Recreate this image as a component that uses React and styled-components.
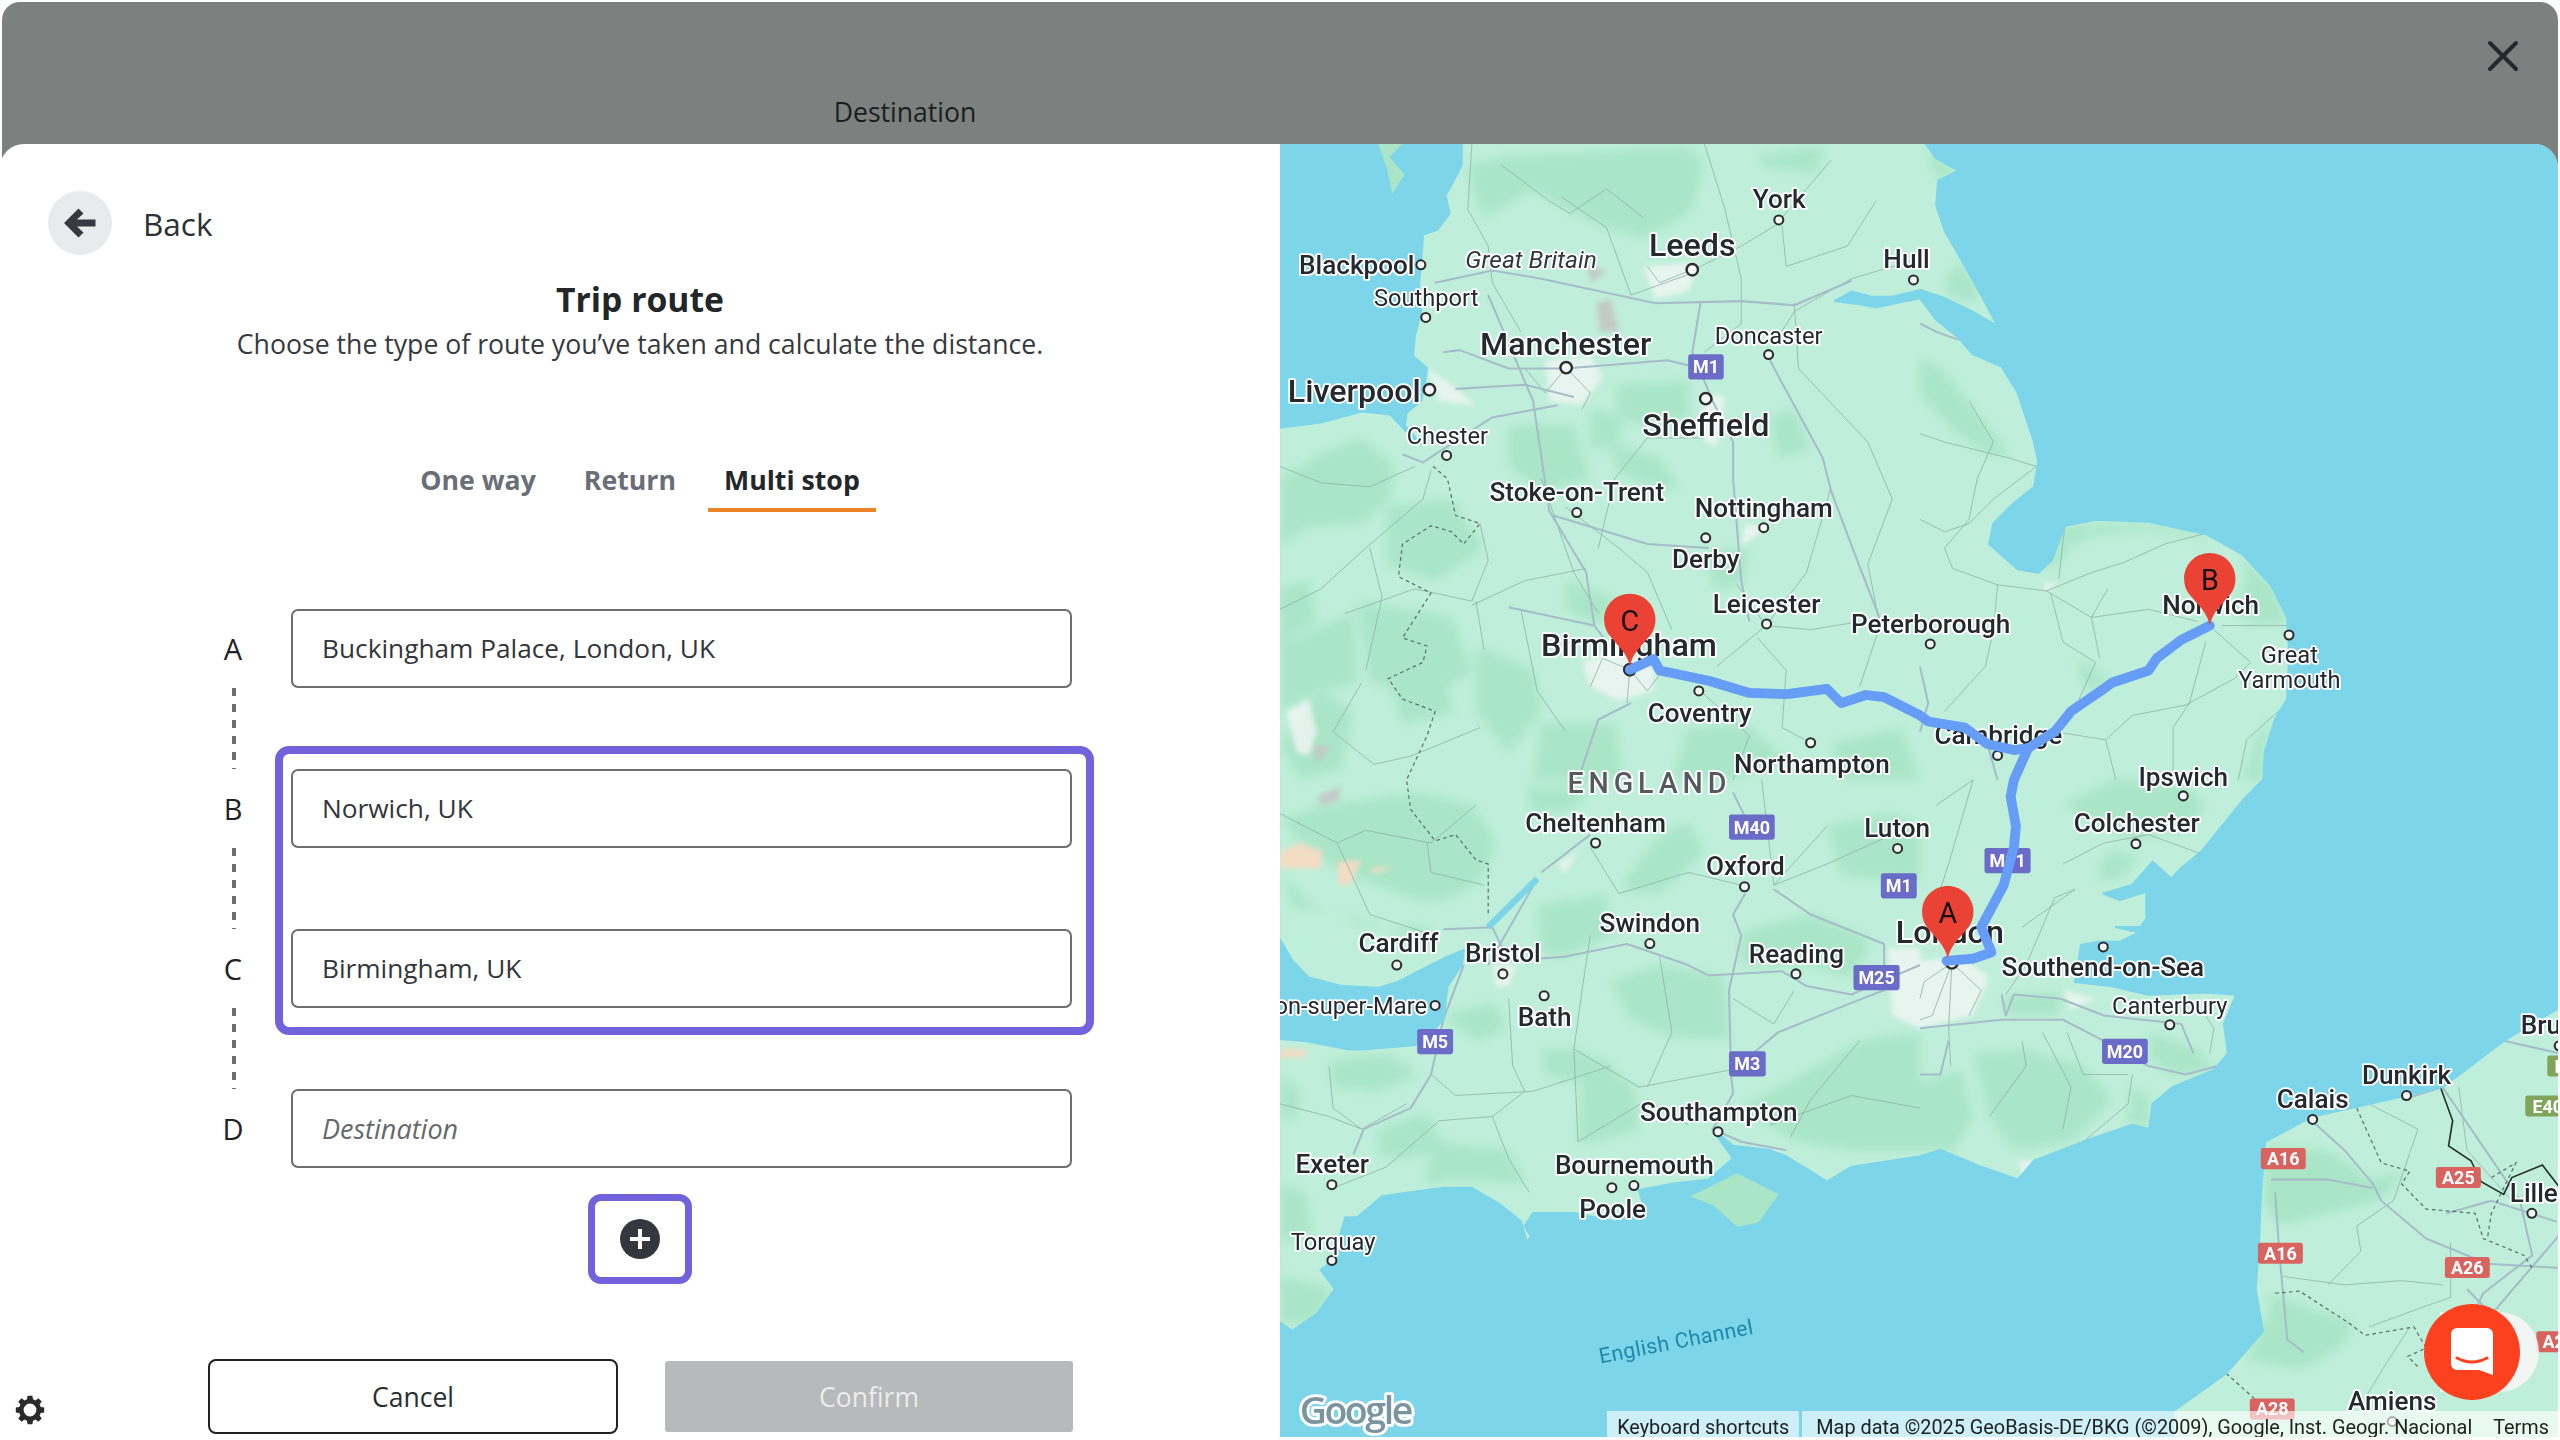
import React from 'react'
import styled, { createGlobalStyle } from 'styled-components'

const PURPLE = '#7263dc'
const FONT = '"Open Sans", "Noto Sans", sans-serif'
const SEA = '#7dd5ea'

const GlobalStyle = createGlobalStyle`
  html, body {
    margin: 0;
    background: #fff;
    font-family: ${FONT};
  }
`

const Page = styled.div`
  width: 2560px;
  height: 1440px;
  overflow: hidden;
  background: #fff;
`

const Header = styled.header`
  height: 172px;
  margin: 2px 2px -30px;
  padding-top: 90px;
  box-sizing: border-box;
  background: #7c807e;
  border-radius: 18px 18px 0 0;
  position: relative;
  text-align: center;
`

const HeaderTitle = styled.div`
  width: 1806px;
  font-size: 26.6px;
  font-weight: 500;
  line-height: 40px;
  color: #1b1e1d;
`

const CloseButton = styled.button`
  position: absolute;
  top: 34px;
  right: 35px;
  width: 40px;
  height: 40px;
  padding: 0;
  border: 0;
  background: none;
`

const Body = styled.div`
  display: flex;
  height: 1293px;
  position: relative;
`

const Panel = styled.section`
  width: 1280px;
  box-sizing: border-box;
  padding-top: 47px;
  background: #fff;
  border-radius: 24px 0 0 14px;
  position: relative;
`

const BackRow = styled.div`
  display: flex;
  align-items: center;
  gap: 31px;
  margin-left: 48px;
  height: 64px;
  font-size: 31.5px;
  color: #2d3136;
`

const BackCircle = styled.span`
  display: flex;
  align-items: center;
  justify-content: center;
  width: 64px;
  height: 64px;
  border-radius: 50%;
  background: #e9eaec;
`

const Title = styled.h1`
  margin: 20px 0 0;
  text-align: center;
  font-size: 33.7px;
  line-height: 48px;
  font-weight: 700;
  color: #222629;
`

const Subtitle = styled.p`
  margin: 1px 0 0;
  text-align: center;
  font-size: 26.65px;
  line-height: 40px;
  color: #36393d;
`

const Tabs = styled.nav`
  display: flex;
  justify-content: center;
  gap: 16px;
  margin: 84px 0 0;
`

const Tab = styled.div`
  height: 64px;
  box-sizing: border-box;
  padding: 13px 16px 0;
  font-size: 26.7px;
  line-height: 38px;
  font-weight: 700;
  color: ${p => (p.$active ? '#24272a' : '#6a6e76')};
  border-bottom: 4px solid ${p => (p.$active ? '#ec8325' : 'transparent')};
`

const Stops = styled.div`
  position: relative;
  margin: 97px 0 0 213px;
  width: 859px;
`

const Stop = styled.div`
  display: flex;
  align-items: center;
  gap: 38px;
  height: 79px;
`

const StopLetter = styled.span`
  width: 40px;
  text-align: center;
  font-size: 29px;
  color: #1f2225;
`

const StopInput = styled.div`
  flex: 1;
  height: 79px;
  box-sizing: border-box;
  padding-left: 29px;
  border: 2px solid #6d6e70;
  border-radius: 7px;
  font-size: ${p => (p.$empty ? 27 : 26.25)}px;
  line-height: 75px;
  color: ${p => (p.$empty ? '#66696c' : '#33363a')};
  font-style: ${p => (p.$empty ? 'italic' : 'normal')};
`

const Connector = styled.div`
  width: 4px;
  height: 81px;
  margin-left: 19px;
  background: repeating-linear-gradient(to bottom, #6d6e70 0 8px, transparent 8px 16px);
`

const Highlight = styled.div`
  position: absolute;
  top: 137px;
  left: 62px;
  width: 819px;
  height: 289px;
  box-sizing: border-box;
  border: 8px solid ${PURPLE};
  border-radius: 14px;
  pointer-events: none;
`

const AddButton = styled.button`
  display: flex;
  align-items: center;
  justify-content: center;
  width: 104px;
  height: 90px;
  margin: 26px 0 0 588px;
  padding: 0;
  background: #fff;
  border: 7px solid ${PURPLE};
  border-radius: 13px;
`

const Actions = styled.div`
  display: flex;
  align-items: center;
  gap: 47px;
  margin: 75px 0 0 208px;
`

const Button = styled.button`
  width: ${p => (p.$primary ? 408 : 410)}px;
  height: ${p => (p.$primary ? 71 : 75)}px;
  padding: 0;
  font-family: ${FONT};
  font-size: 26.5px;
  color: ${p => (p.$primary ? '#eceded' : '#2b2e31')};
  background: ${p => (p.$primary ? '#b7b9ba' : '#fff')};
  border: ${p => (p.$primary ? '0' : '2px solid #222')};
  border-radius: ${p => (p.$primary ? 3 : 8)}px;
`

const Gear = styled.span`
  position: absolute;
  left: 15px;
  bottom: 12px;
  display: flex;
`

const MapArea = styled.section`
  width: 1278px;
  height: 1293px;
  position: relative;
  overflow: hidden;
  background: ${SEA};
  border-radius: 0 24px 0 0;
`

const MapSvg = styled.svg`
  display: block;
  width: 1278px;
  height: 1293px;
`

const PlaceText = styled.text`
  font-family: Roboto, sans-serif;
  font-size: ${p => p.$size}px;
  font-weight: ${p => p.$weight};
  font-style: ${p => (p.$italic ? 'italic' : 'normal')};
  letter-spacing: ${p => p.$track || 0}px;
  fill: ${p => p.$color || '#25282c'};
  stroke: #fff;
  stroke-width: 9px;
  stroke-linejoin: round;
  paint-order: stroke;
  text-anchor: ${p => p.$anchor || 'middle'};
`

const ShieldText = styled.text`
  font-family: Roboto, sans-serif;
  font-size: 44px;
  font-weight: 700;
  fill: #fff;
  text-anchor: middle;
`

const PinLetter = styled.text`
  font-family: Roboto, sans-serif;
  font-size: 70px;
  fill: #111;
  text-anchor: middle;
`

const ChannelText = styled.text`
  font-family: Roboto, sans-serif;
  font-size: 52px;
  letter-spacing: 1px;
  fill: #1f8aa8;
`

const GoogleText = styled.text`
  font-family: "Open Sans", sans-serif;
  font-size: 92px;
  font-weight: 600;
  letter-spacing: -6px;
  fill: #7a95a0;
  stroke: #fff;
  stroke-width: 14px;
  stroke-linejoin: round;
  paint-order: stroke;
`

const Attribution = styled.div`
  position: absolute;
  right: 0;
  bottom: 0;
  display: flex;
  gap: 3px;
  height: 26px;
  font-family: Roboto, sans-serif;
  font-size: 19.85px;
  line-height: 33px;
  color: #222;
  white-space: nowrap;
  overflow: hidden;
`

const AttributionCell = styled.span`
  display: flex;
  gap: 21px;
  padding: 0 ${p => p.$right}px 0 ${p => p.$left}px;
  background: rgba(255, 255, 255, 0.62);
`

const ChatTail = styled.div`
  position: absolute;
  left: 1160px;
  top: 1168px;
  width: 99px;
  height: 80px;
  border-radius: 0 40px 40px 0;
  background: rgba(245, 245, 245, 0.92);
`

const ChatButton = styled.div`
  position: absolute;
  left: 1144px;
  top: 1160px;
  width: 96px;
  height: 96px;
  border-radius: 50%;
  background: #fb411e;
  display: flex;
  align-items: center;
  justify-content: center;
`

// quadrants of the map, read from four crops of the reference
const Q = [
  [0, 0, 1],
  [1568, 0, 1],
  [0, 1568, 1.031],
  [1568, 1568, 1.031]
]

const at = (q, x, y) => [x + Q[q][0], y * Q[q][2] + Q[q][1]]

const pts = (q, s) =>
  s
    .trim()
    .split(/\s+/)
    .map(v => {
      const [x, y] = v.split(',').map(Number)
      return at(q, x, y).join(',')
    })
    .join(' ')

const poly = segs => 'M' + segs.map(([q, s]) => pts(q, s)).join(' ') + 'Z'
const line = segs => 'M' + segs.map(([q, s]) => pts(q, s)).join(' ')

const IRISH_SEA = poly([
  [0, '0,10 445,10 445,60 420,110 405,135 415,180 385,220 350,232 345,300 340,350 345,420 330,480 325,530 360,560 352,610 345,640 310,668 305,700 345,745 320,725 270,672 200,665 100,692 0,705']
])

const FURNESS = '240,10 262,70 275,132 305,85 268,42 300,10'

const NORTH_SEA = poly([
  [1, '15,10 40,45 95,75 45,100 40,160 62,225 100,290 150,380 192,458 130,422 60,388 0,368'],
  [0, '1500,385 1450,385 1400,372 1360,395 1420,402 1460,410 1530,395'],
  [1, '0,388 40,440 95,485 130,525 200,555 240,620 280,740 290,790 280,850 230,890 180,940 170,990 215,1030 240,1052 290,1060 322,1030 355,945 430,930 560,935 700,965 790,1015 860,1090 900,1170 905,1260 900,1370 870,1420 845,1500 842,1568'],
  [3, '835,5 790,50 740,110 690,170 640,210 615,235 570,195 520,250 450,270 490,285 555,265 555,330 540,350 480,350 540,362 490,385 440,385 395,392 380,480 470,490 560,510 700,505 775,510 745,580 755,650 720,690 620,730 570,770 562,830 520,820 400,860 280,905 240,950 150,920 50,880 0,895'],
  [2, '1400,920 1340,955 1290,925 1240,895 1200,880 1110,870 1060,830 1110,900 1050,950 960,960 880,975 895,1025 820,1050 720,1030 620,1030 600,1060 615,1085 605,1100 590,1050 540,1010 470,970 400,970 250,990 190,1040 160,1040 130,1140 100,1165 135,1210 90,1270 30,1310 0,1290 0,1620'],
  [3, '620,1620 620,1500 750,1410 840,1310 822,1210 830,1100 835,980 845,860 960,800 1100,770 1280,730 1430,620 1568,540'],
  [1, '1568,540 1568,10']
])

const BRISTOL = poly([
  [2, '0,380 30,430 70,470 150,490 240,495 290,480 330,460 400,425 450,405 445,440 410,490 400,570 370,600 330,630 200,640 170,640 60,620 0,615']
])

const ISLE_OF_WIGHT = '1005,990 1120,935 1222,985 1172,1052 1120,1062 1060,1010'

const MID_GREEN = [
  [0, '460,60 560,40 1000,15 1040,60 1010,170 900,240 800,215 700,170 620,120 500,190 470,120'],
  [0, '1160,40 1330,15 1320,80 1200,70'],
  [0, '0,830 100,770 200,730 280,800 270,880 200,940 60,950 0,1000'],
  [0, '760,660 840,680 830,740 760,760'],
  [0, '820,600 1000,590 1000,680 900,700 830,680'],
  [0, '800,740 930,780 980,860 880,840 830,810'],
  [0, '190,1130 420,1170 470,1300 380,1360 220,1330'],
  [0, '260,1300 380,1280 430,1400 300,1430'],
  [0, '480,1240 620,1300 640,1400 560,1500 480,1400'],
  [0, '100,1350 180,1400 150,1540 50,1568 0,1480'],
  [0, '700,1080 830,1130 780,1190 700,1150'],
  [0, '1200,680 1260,660 1300,760 1220,780'],
  [0, '0,1100 70,1080 90,1180 0,1240'],
  [0, '1050,1010 1150,1000 1130,1090 1060,1100'],
  [0, '560,700 720,700 760,830 640,860 560,800'],
  [0, '260,900 420,880 500,1000 380,1080 260,1040'],
  [0, '0,1240 180,1160 190,1330 100,1350 0,1400'],
  [0, '1000,1440 1140,1430 1240,1520 1100,1568 960,1568'],
  [0, '1350,1480 1520,1440 1568,1568 1380,1568'],
  [0, '640,1430 820,1430 840,1568 620,1568'],
  [1, '0,530 60,570 130,660 220,770 180,775 90,720 0,620'],
  [1, '355,945 560,940 700,965 720,982 560,955 400,975 360,1000 340,1040 292,1062'],
  [1, '790,1020 870,1100 900,1180 830,1190 770,1160 800,1080'],
  [1, '900,1370 860,1420 842,1500 842,1568 790,1568 830,1450'],
  [1, '380,1270 470,1320 410,1350'],
  [1, '100,300 150,380 120,400 60,370 70,330'],
  [1, '10,20 95,75 45,100 30,60'],
  [2, '100,60 350,30 470,60 530,150 490,240 420,280 350,290 210,240 120,200 0,100'],
  [2, '0,220 80,300 220,350 360,350 380,400 200,330 30,300'],
  [2, '630,300 800,270 810,370 700,420 640,410'],
  [2, '640,640 720,640 800,670 870,740 880,830 730,870 740,720 650,700'],
  [2, '810,480 930,440 1090,470 1100,620 960,610 860,570'],
  [2, '1130,360 1300,320 1450,380 1400,470 1300,440 1130,440'],
  [2, '400,560 520,530 560,590 480,620'],
  [2, '240,830 360,790 400,880 300,900 240,890'],
  [2, '120,670 260,650 340,700 240,740 130,730'],
  [2, '0,700 50,740 40,800 0,810'],
  [2, '0,960 60,980 80,1080 0,1100'],
  [2, '1130,780 1300,690 1420,620 1568,600 1568,880 1400,880 1270,860 1200,820'],
  [2, '1500,80 1568,110 1568,240 1380,230 1340,110'],
  [2, '930,130 1000,100 1040,170 930,270 830,260'],
  [2, '380,860 560,880 600,960 450,950 350,960'],
  [2, '600,20 760,20 720,70 620,80'],
  [2, '0,1180 130,1210 80,1290 0,1290'],
  [3, '130,650 250,640 400,680 470,760 370,860 230,880 170,800'],
  [3, '0,720 100,690 130,800 80,880 0,880'],
  [3, '560,600 680,640 720,690 620,700 560,660'],
  [3, '510,730 560,750 560,830 500,810 520,770'],
  [3, '850,870 1000,880 1100,950 1200,930 1120,1000 1000,1030 880,1060 840,1000'],
  [3, '850,1220 1060,1290 1040,1340 940,1400 800,1380 830,1310 860,1260'],
  [3, '350,60 520,140 640,120 700,60 640,10 470,0'],
  [3, '460,170 540,180 480,240 430,230'],
  [3, '200,520 340,500 340,560 220,560']
]

const URBAN = [
  [3, '0,430 100,420 170,470 130,560 0,590'],
  [2, '1490,400 1568,400 1568,590 1500,560'],
  [0, '740,1280 810,1250 920,1290 915,1350 830,1375 760,1340'],
  [0, '650,540 760,530 790,580 740,650 660,640'],
  [0, '890,310 1030,300 1000,370 920,390'],
  [0, '360,560 420,600 480,650 390,640'],
  [0, '1030,620 1090,630 1070,750 1040,740'],
  [0, '1140,940 1195,950 1130,995'],
  [0, '15,1400 70,1370 90,1450 70,1510 40,1500'],
  [2, '520,440 580,440 560,490 530,490'],
  [3, '350,500 430,520 370,545'],
  [1, '300,1085 335,1085 315,1110'],
  [3, '240,905 285,905 255,945'],
  [2, '680,200 730,170 700,220'],
  [2, '1170,880 1230,880 1200,930']
]

const PATCHES = [
  [2, '0,170 50,150 105,170 100,210 0,210', '#f2dcc2'],
  [2, '140,195 200,190 170,250 145,250', '#f2dcc2'],
  [2, '220,210 280,205 230,225', '#f2dcc2'],
  [2, '0,640 60,640 65,660 0,660', '#f2dcc2'],
  [2, '90,40 150,15 140,50 100,60', '#c3cac6'],
  [0, '750,310 800,320 765,350', '#c3cac6'],
  [0, '775,400 810,390 830,470 785,470', '#c3cac6'],
  [0, '80,1480 125,1490 90,1525', '#c3cac6']
]

const MINOR_ROADS = [
  [[0, '470,10 460,170 510,260 520,350 590,470']],
  [[0, '1040,10 1090,170 1130,340 1130,450 1040,520']],
  [[0, '1230,200 1130,260 1010,320']],
  [[0, '1350,50 1230,190']],
  [[0, '690,140 800,215 860,380 1000,330']],
  [[0, '1210,500 1260,420 1400,340 1568,290']],
  [[0, '370,810 350,880 210,1000 100,1100 0,1150']],
  [[0, '0,800 100,840 220,850 330,800']],
  [[0, '490,940 510,1030 470,1130 330,1100 160,1160']],
  [[0, '470,1140 600,1080 750,1050']],
  [[0, '500,1250 480,1130']],
  [[0, '200,1330 130,1450 230,1530 320,1510 490,1440']],
  [[0, '640,830 720,1060 780,1160']],
  [[0, '1350,850 1290,1060 1190,1190 1070,1290']],
  [[0, '1440,740 1500,880 1440,1040 1470,1190 1420,1340']],
  [[0, '960,1200 900,1060 830,1000 700,900']],
  [[0, '1120,1090 1190,1190 1300,1200 1420,1180']],
  [[0, '540,60 660,150 710,180 800,120 890,190']],
  [[0, '1230,210 1240,310 1390,260 1460,150']],
  [[0, '1260,400 1270,560 1440,740']],
  [[0, '780,1000 820,830 900,730 1040,730']],
  [[0, '220,1000 250,1120 210,1300']],
  [[0, '590,1150 630,1350 700,1450']],
  [[0, '1170,1220 1240,1300 1230,1440 1300,1477']],
  [[0, '1030,1350 1150,1460 1110,1568']],
  [[1, '0,720 60,740 220,780 285,800 180,880 120,940 60,960 0,930']],
  [[1, '120,640 180,740 140,830 120,930 60,1000 80,1050 190,1090 310,1105 420,1170 560,1150 680,1180']],
  [[1, '310,1105 420,1060 500,1035 600,990 715,960']],
  [[1, '190,1090 180,1200 160,1290 60,1400']],
  [[1, '320,1110 350,1230 430,1280 390,1370']],
  [[1, '700,1230 660,1380 620,1440 620,1568']],
  [[1, '720,1200 810,1280 770,1320 650,1385 520,1410 455,1470 300,1445']],
  [[1, '900,1380 800,1470 780,1568']],
  [[1, '740,1190 900,1190']],
  [[1, '355,945 340,1075']],
  [[1, '460,1100 420,1170 440,1270']],
  [[1, '455,1470 480,1568']],
  [[2, '0,80 140,150 210,120 370,150 480,60']],
  [[2, '140,150 220,320 380,370']],
  [[2, '360,150 370,220 500,250']],
  [[2, '760,370 740,500 720,640 880,730 1100,690']],
  [[2, '810,680 620,740 430,750 370,700']],
  [[2, '520,800 560,900 610,980']],
  [[2, '720,640 730,860 900,760 1000,820']],
  [[2, '560,520 570,680 600,740 520,800 390,810 260,920 130,970']],
  [[2, '930,420 960,600 900,730']],
  [[2, '0,770 120,800 200,830']],
  [[2, '1210,250 1340,200 1500,130']],
  [[2, '1110,520 1210,580 1260,500']],
  [[2, '1200,820 1400,750 1568,780']],
  [[2, '1420,620 1300,760 1250,850']],
  [[2, '760,160 830,270 1000,220 1130,250']],
  [[2, '120,680 130,780 200,830 310,770']],
  [[2, '1340,110 1210,250 1180,0']],
  [[3, '40,60 130,0 70,200 50,260']],
  [[3, '350,200 450,150 560,130 700,180']],
  [[3, '250,350 380,260 330,280 260,440 210,510']],
  [[3, '360,600 400,700 510,700']],
  [[3, '300,600 370,730 350,830']],
  [[3, '170,800 260,680 250,620']],
  [[3, '520,700 510,770 400,860']],
  [[3, '710,650 720,590 700,560']],
  [[3, '1320,730 1340,880 1450,1000']],
  [[3, '1100,770 1220,830 1160,1000 1070,1060 1080,1120 1000,1200']],
  [[3, '890,1180 1040,1200 1180,1190 1280,1200']],
  [[3, '1200,1300 1140,1390 1090,1470']],
  [[3, '1300,1100 1300,1230 1240,1250 1100,1300']],
  [[3, '78,435 10,480 0,520']],
  [[3, '78,435 150,500 120,560']],
  [[3, '78,435 70,590 75,680']],
  [[3, '78,435 30,560 0,570']],
  [[0, '857,1298 790,1270 760,1340']],
  [[0, '857,1298 900,1350 930,1310']],
  [[0, '857,1298 850,1380']],
  [[0, '701,558 650,620 600,560']],
  [[0, '701,558 760,620 740,660']],
  [[0, '1010,318 930,350 900,310']]
]

const MAJOR_ROADS = [
  [[0, '400,520 440,515 560,560 700,560 950,540 1030,560']],
  [[0, '380,350 520,320 640,340 920,400 1130,395 1260,405 1400,345']],
  [[0, '510,380 620,640 660,910 750,1060 770,1190']],
  [[0, '430,610 600,600 720,630']],
  [[0, '300,770 350,790 520,680 680,650']],
  [[0, '1030,400 1010,520 1060,640 1110,740 1110,830 1130,1080 1150,1180']],
  [[0, '1200,540 1330,780 1350,860 1410,1020 1480,1200']],
  [[0, '670,920 900,990 1050,1000']],
  [[0, '560,1145 770,1190 800,1230']],
  [[0, '860,1380 780,1420 730,1568']],
  [[1, '0,1290 20,1380 0,1450']],
  [[1, '165,1480 190,1568']],
  [[1, '0,450 40,470 95,490']],
  [[2, '1110,30 1165,140']],
  [[2, '400,355 520,350 560,430 700,420 850,390 1000,440 1050,465 1230,455 1290,490 1400,510 1568,440']],
  [[2, '450,440 400,570 370,700 320,780 205,830 180,890']],
  [[2, '630,235 510,440']],
  [[2, '1140,270 1110,320 1130,370 1100,500 1105,700 1110,745 1060,830 1130,860 1240,880']],
  [[2, '1210,260 1300,320 1480,390 1480,500 1400,530 1220,600 1110,690']],
  [[2, '640,220 760,130']],
  [[3, '0,590 200,570 350,570 440,615 560,680 650,700 730,680']],
  [[3, '200,510 210,560 230,510 345,520 450,560 640,580 670,650']],
  [[3, '0,700 50,700 70,620']],
  [[3, '960,810 1040,880 1110,960 1130,1000 1240,1090 1390,1150 1568,1160']],
  [[3, '860,950 1000,950 1110,970']],
  [[3, '870,980 880,1120 900,1330 940,1360']],
  [[3, '1180,760 1280,730 1470,1000 1500,1130 1380,1220 1340,1300']],
  [[3, '1340,1210 1400,1270 1568,1080']],
  [[3, '1290,1030 1400,1000 1560,1050']],
  [[3, '1430,620 1568,650']]
]

const DASHED = [
  [[0, '375,800 410,830 430,920 490,940 450,990 420,960 370,945 300,990 290,1070 370,1110 300,1220 360,1240 350,1280 265,1320 300,1370 380,1400 360,1460 310,1568'], [2, '310,0 320,70 380,145 430,130 480,190 510,200 510,320']],
  [[3, '1070,780 1130,910 1200,930 1180,960 1240,1020 1360,1030 1380,1090 1480,1130 1500,1160']],
  [[3, '870,1220 930,1215 1050,1290 1090,1320 1210,1300 1240,1350 1195,1370 1220,1395']],
  [[3, '1400,945 1460,910 1400,1030 1390,1090']],
  [[3, '750,1410 830,1480']]
]

const ROUTE = [
  [0, '857,1298 915,1272 930,1300 1050,1325 1150,1355 1240,1358 1340,1345 1375,1380 1435,1360 1480,1365 1568,1410'],
  [1, '20,1425 110,1440 165,1480 230,1495 265,1490 330,1450 370,1400 450,1345 470,1330 560,1300 580,1270 640,1225 710,1190']
]

const ROUTE_SOUTH = [
  [1, '265,1490 230,1568'],
  [3, '222,40 235,110 230,160 205,250 150,350 175,410 130,425 65,430']
]

const PLACES = [
  [0, 700, 527, 'Manchester', 'big'], [0, 182, 642, 'Liverpool', 'big'], [0, 1010, 285, 'Leeds', 'big'],
  [0, 1043, 725, 'Sheffield', 'big'], [0, 855, 1265, 'Birmingham', 'big'], [3, 73, 387, 'London', 'big'],
  [0, 188, 329, 'Blackpool', 'mid'], [0, 1192, 1158, 'Leicester', 'mid'], [0, 1185, 924, 'Nottingham', 'mid'],
  [0, 1043, 1050, 'Derby', 'mid'], [0, 727, 885, 'Stoke-on-Trent', 'mid'], [0, 1223, 167, 'York', 'mid'],
  [0, 1028, 1425, 'Coventry', 'mid'], [0, 1303, 1552, 'Northampton', 'mid'], [0, 1594, 1207, 'Peterborough', 'mid'],
  [0, 1535, 314, 'Hull', 'mid'], [1, 712, 1162, 'Norwich', 'mid'], [1, 192, 1480, 'Cambridge', 'mid'],
  [3, 645, 14, 'Ipswich', 'mid'], [2, 773, 124, 'Cheltenham', 'mid'], [2, 1512, 136, 'Luton', 'mid'],
  [2, 1140, 227, 'Oxford', 'mid'], [2, 906, 362, 'Swindon', 'mid'], [2, 290, 410, 'Cardiff', 'mid'],
  [2, 546, 432, 'Bristol', 'mid'], [2, 1265, 434, 'Reading', 'mid'], [2, 648, 585, 'Bath', 'mid'],
  [2, 128, 935, 'Exeter', 'mid'], [2, 1075, 810, 'Southampton', 'mid'], [2, 868, 937, 'Bournemouth', 'mid'],
  [2, 815, 1040, 'Poole', 'mid'], [3, 531, 124, 'Colchester', 'mid'], [3, 448, 467, 'Southend-on-Sea', 'mid'],
  [3, 962, 780, 'Calais', 'mid'], [3, 1192, 722, 'Dunkirk', 'mid'], [3, 1157, 1497, 'Amiens', 'mid'],
  [3, 1445, 1002, 'Lille', 'mid', 'start'], [3, 1472, 604, 'Bruges', 'mid', 'start'],
  [0, 358, 407, 'Southport', 'small'], [0, 1197, 499, 'Doncaster', 'small'], [0, 410, 745, 'Chester', 'small'],
  [1, 905, 1282, 'Great', 'small'], [1, 905, 1342, 'Yarmouth', 'small'], [2, 130, 1117, 'Torquay', 'small'],
  [3, 612, 557, 'Canterbury', 'small'], [2, 360, 557, 'Weston-super-Mare', 'small', 'end']
]

const PLACE_STYLE = {
  big: { size: 79, weight: 500 },
  mid: { size: 64, weight: 500 },
  small: { size: 58, weight: 400 }
}

const DOTS = [
  [0, 1222, 196], [0, 1010, 318, 1], [0, 345, 306], [0, 357, 435], [0, 701, 558, 1], [0, 366, 612, 1],
  [0, 1197, 526], [0, 1043, 634, 1], [0, 408, 773], [0, 727, 913], [0, 1185, 950], [0, 1043, 975],
  [0, 1192, 1186], [0, 857, 1298, 1], [0, 1026, 1350], [0, 1300, 1477], [0, 1552, 343], [1, 25, 1235],
  [1, 904, 1213], [1, 190, 1508], [2, 773, 150], [2, 1513, 163], [2, 1138, 254], [2, 906, 389],
  [2, 286, 440], [2, 546, 461], [2, 647, 513], [2, 380, 536], [2, 127, 962], [2, 127, 1142],
  [2, 1073, 836], [2, 867, 964], [2, 813, 969], [2, 1264, 461], [3, 645, 38], [3, 529, 152],
  [3, 449, 397], [3, 612, 582], [3, 962, 807], [3, 1192, 750], [3, 1499, 1030], [3, 1157, 1525],
  [3, 1566, 632], [3, 78, 435, 1]
]

const BLUE = '#6a6cc8'
const RED = '#d9635f'
const GREEN = '#7fa45a'

const SHIELDS = [
  [0, 1000, 525, 87, 62, 'M1', BLUE], [2, 1100, 82, 112, 60, 'M40', BLUE], [2, 1472, 222, 88, 60, 'M1', BLUE],
  [2, 336, 592, 88, 60, 'M5', BLUE], [2, 1100, 645, 90, 60, 'M3', BLUE], [2, 1405, 440, 113, 60, 'M25', BLUE],
  [3, 446, 615, 112, 60, 'M20', BLUE], [3, 158, 162, 113, 60, 'M11', BLUE], [3, 835, 875, 110, 50, 'A16', RED],
  [3, 828, 1100, 110, 50, 'A16', RED], [3, 1264, 920, 110, 50, 'A25', RED], [3, 1286, 1134, 110, 50, 'A26', RED],
  [3, 808, 1470, 110, 50, 'A28', RED], [3, 1510, 1310, 110, 50, 'A26', RED], [3, 1483, 750, 110, 50, 'E40', GREEN],
  [3, 1537, 655, 110, 50, 'E40', GREEN]
]

const PINS = [
  [0, 857, 1290, 'C'],
  [1, 710, 1190, 'B'],
  [3, 68, 425, 'A']
]

const Place = ({ q, x, y, text, kind, anchor }) => {
  const [px, py] = at(q, x, y)
  const s = PLACE_STYLE[kind]
  return (
    <PlaceText x={px} y={py} $size={s.size} $weight={s.weight} $anchor={anchor}>
      {text}
    </PlaceText>
  )
}

const Shield = ({ q, x, y, w, h, text, color }) => {
  const [px, py] = at(q, x, y)
  return (
    <g>
      <rect x={px} y={py} width={w} height={h * Q[q][2]} rx="6" fill={color} />
      <ShieldText x={px + w / 2} y={py + h * Q[q][2] / 2 + 16}>
        {text}
      </ShieldText>
    </g>
  )
}

const Pin = ({ q, x, y, text }) => {
  const [px, py] = at(q, x, y)
  return (
    <g transform={`translate(${px} ${py})`}>
      <path
        d="M0 0C-6 -32 -30 -52 -50 -76C-58 -86 -63 -100 -63 -115C-63 -150 -35 -178 0 -178C35 -178 63 -150 63 -115C63 -100 58 -86 50 -76C30 -52 6 -32 0 0Z"
        fill="#ea4335"
      />
      <PinLetter x="0" y="-88">
        {text}
      </PinLetter>
    </g>
  )
}

const MapPicture = () => (
  <MapSvg viewBox="0 10 3131 3168" role="img" aria-label="Map of southern England">
    <defs>
      <filter id="soft" x="-5%" y="-5%" width="110%" height="110%">
        <feGaussianBlur stdDeviation="14" />
      </filter>
      <filter id="softer" x="-5%" y="-5%" width="110%" height="110%">
        <feGaussianBlur stdDeviation="6" />
      </filter>
    </defs>
    <rect x="0" y="0" width="3136" height="3200" fill="#bfefda" />
    <g fill="#a9e5c6" filter="url(#soft)">
      {MID_GREEN.map(([q, s], i) => (
        <polygon key={i} points={pts(q, s)} />
      ))}
    </g>
    <g filter="url(#softer)">
      {PATCHES.map(([q, s, c], i) => (
        <polygon key={i} points={pts(q, s)} fill={c} />
      ))}
      {URBAN.map(([q, s], i) => (
        <polygon key={i} points={pts(q, s)} fill="#eef5f3" opacity="0.85" />
      ))}
    </g>
    <g fill="none" stroke="#8fb3a8" strokeWidth="2">
      {MINOR_ROADS.map((r, i) => (
        <path key={i} d={line(r)} />
      ))}
    </g>
    <g fill="none" stroke="#a6bcca" strokeWidth="5" strokeLinejoin="round">
      {MAJOR_ROADS.map((r, i) => (
        <path key={i} d={line(r)} />
      ))}
    </g>
    <g fill="none" stroke="#5c6f68" strokeWidth="3" strokeDasharray="9 8">
      {DASHED.map((r, i) => (
        <path key={i} d={line(r)} />
      ))}
    </g>
    <path d={line([[3, '1275,730 1305,810 1295,870 1350,905 1375,955 1430,985 1450,945 1525,915 1568,970']])} fill="none" stroke="#24302c" strokeWidth="4" />
    <g fill={SEA} strokeLinejoin="round" stroke={SEA} strokeWidth="6">
      <path d={IRISH_SEA} />
      <path d={NORTH_SEA} />
      <path d={BRISTOL} />
    </g>
    <polygon points={pts(0, FURNESS)} fill="#a9e5c6" />
    <polygon points={pts(2, ISLE_OF_WIGHT)} fill="#a9e5c6" />
    <path d={line([[2, '510,350 630,235']])} stroke={SEA} strokeWidth="16" />
    <g>
      {DOTS.map(([q, x, y, big], i) => {
        const [cx, cy] = at(q, x, y)
        return <circle key={i} cx={cx} cy={cy} r={big ? 14 : 11} fill="#f4f6f5" stroke="#2b2e30" strokeWidth={big ? 6 : 5} />
      })}
    </g>
    {SHIELDS.map(([q, x, y, w, h, text, color], i) => (
      <Shield key={i} q={q} x={x} y={y} w={w} h={h} text={text} color={color} />
    ))}
    {PLACES.map(([q, x, y, text, kind, anchor]) => (
      <Place key={text} q={q} x={x} y={y} text={text} kind={kind} anchor={anchor} />
    ))}
    <PlaceText x="905" y="1600" $size={70} $weight={500} $track={12} $color="#565a5e">
      ENGLAND
    </PlaceText>
    <PlaceText x="615" y="314" $size={60} $weight={400} $italic $color="#33373b">
      Great Britain
    </PlaceText>
    <ChannelText transform="translate(785 2998) rotate(-11)">English Channel</ChannelText>
    <g fill="none" stroke="#669df6" strokeWidth="24" strokeLinejoin="round" strokeLinecap="round">
      <path d={line(ROUTE)} />
      <path d={line(ROUTE_SOUTH)} />
    </g>
    {PINS.map(([q, x, y, text]) => (
      <Pin key={text} q={q} x={x} y={y} text={text} />
    ))}
    <GoogleText x="48" y="3145">Google</GoogleText>
  </MapSvg>
)

const stops = [
  { letter: 'A', value: 'Buckingham Palace, London, UK' },
  { letter: 'B', value: 'Norwich, UK' },
  { letter: 'C', value: 'Birmingham, UK' },
  { letter: 'D', value: 'Destination', empty: true }
]

const App = () => (
  <Page>
    <GlobalStyle />
    <Header>
      <HeaderTitle>Destination</HeaderTitle>
      <CloseButton aria-label="Close">
        <svg width="40" height="40" viewBox="0 0 40 40" fill="none" stroke="#23282a" strokeWidth="4" strokeLinecap="round">
          <path d="M7 7L33 33M33 7L7 33" />
        </svg>
      </CloseButton>
    </Header>
    <Body>
      <Panel>
        <BackRow>
          <BackCircle>
            <svg width="32" height="32" viewBox="0 0 32 32" fill="#353a40">
              <path d="M14.5 1.5L19.5 6.5L13 12.5H31.5V19.5H13L19.5 25.5L14.5 30.5L0 16Z" />
            </svg>
          </BackCircle>
          Back
        </BackRow>
        <Title>Trip route</Title>
        <Subtitle>Choose the type of route you’ve taken and calculate the distance.</Subtitle>
        <Tabs>
          <Tab>One way</Tab>
          <Tab>Return</Tab>
          <Tab $active>Multi stop</Tab>
        </Tabs>
        <Stops>
          {stops.map((s, i) => (
            <React.Fragment key={s.letter}>
              <Stop>
                <StopLetter>{s.letter}</StopLetter>
                <StopInput $empty={s.empty}>{s.value}</StopInput>
              </Stop>
              {i < stops.length - 1 && <Connector />}
            </React.Fragment>
          ))}
          <Highlight />
        </Stops>
        <AddButton aria-label="Add stop">
          <svg width="40" height="40" viewBox="0 0 40 40">
            <circle cx="20" cy="20" r="20" fill="#34383e" />
            <path d="M20 10V30M10 20H30" stroke="#fff" strokeWidth="4" />
          </svg>
        </AddButton>
        <Actions>
          <Button>Cancel</Button>
          <Button $primary>Confirm</Button>
        </Actions>
        <Gear>
          <svg width="30" height="30" viewBox="0 0 30 30" fill="#2a2a2a">
            <path d="M12.6 0.8H17.4L18 4.3L20.5 5.4L23.4 3.3L26.7 6.6L24.6 9.5L25.7 12L29.2 12.6V17.4L25.7 18L24.6 20.5L26.7 23.4L23.4 26.7L20.5 24.6L18 25.7L17.4 29.2H12.6L12 25.7L9.5 24.6L6.6 26.7L3.3 23.4L5.4 20.5L4.3 18L0.8 17.4V12.6L4.3 12L5.4 9.5L3.3 6.6L6.6 3.3L9.5 5.4L12 4.3ZM15 8.6A6.4 6.4 0 1 0 15 21.4A6.4 6.4 0 1 0 15 8.6Z" fillRule="evenodd" />
          </svg>
        </Gear>
      </Panel>
      <MapArea>
        <MapPicture />
        <Attribution>
          <AttributionCell $left={10} $right={10}>Keyboard shortcuts</AttributionCell>
          <AttributionCell $left={14} $right={9}>
            <span>Map data ©2025 GeoBasis-DE/BKG (©2009), Google, Inst. Geogr. Nacional</span>
            <span>Terms</span>
          </AttributionCell>
        </Attribution>
        <ChatTail />
        <ChatButton>
          <svg width="44" height="50" viewBox="0 0 44 50">
            <path d="M7 1H37A6 6 0 0 1 43 7V48L29 43H7A6 6 0 0 1 1 37V7A6 6 0 0 1 7 1Z" fill="#fff" />
            <path d="M7 31Q22 39 37 31" fill="none" stroke="#fb411e" strokeWidth="3" strokeLinecap="round" />
          </svg>
        </ChatButton>
      </MapArea>
    </Body>
  </Page>
)

export default App
